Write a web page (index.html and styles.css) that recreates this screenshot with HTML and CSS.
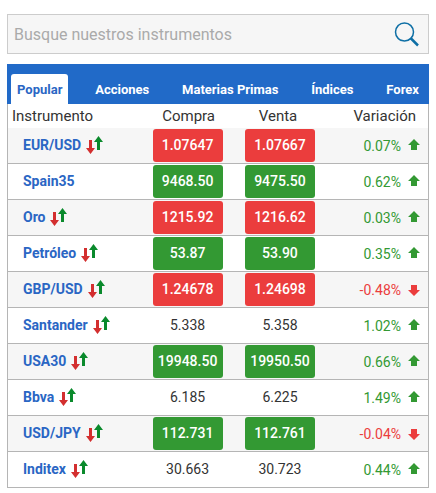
FILE: index.html
```html
<!DOCTYPE html>
<html lang="es">
<head>
    <meta charset="UTF-8">
    <meta name="viewport" content="width=device-width, initial-scale=1.0">
    <title>Instrumentos</title>
    <link rel="stylesheet" href="styles.css">
</head>

<body>
    <svg class="sprite" aria-hidden="true">
        <symbol id="swap" viewBox="0 0 17 18">
            <path fill="#d32f2f" d="M3 4h3v8h3L4.500 18 0 12h3z"/>
            <path fill="#0a8a2c" d="M12.500 0L17 6h-3v8h-3V6H8z"/>
        </symbol>
        <symbol id="up" viewBox="0 0 12 11">
            <path d="M6 0l6 6H9v5H3V6H0z"/>
        </symbol>
        <symbol id="down" viewBox="0 0 12 11">
            <path d="M6 11l6-6H9V0H3v5H0z"/>
        </symbol>
    </svg>

    <form class="search">
        <input class="search-input" type="text" placeholder="Busque nuestros instrumentos" aria-label="Busque nuestros instrumentos">
        <button class="search-btn" type="button" aria-label="Buscar">
            <svg width="25" height="25" viewBox="0 0 25 25" fill="none" stroke="#0e6fa5">
                <circle cx="10.500" cy="10" r="9" stroke-width="1.500"/>
                <path d="M16.500 16l7.500 7.500" stroke-width="2.500"/>
            </svg>
        </button>
    </form>

    <div class="market">
        <div class="tabs">
            <button class="tab active" type="button">Popular</button>
            <button class="tab" type="button">Acciones</button>
            <button class="tab" type="button">Materias Primas</button>
            <button class="tab" type="button">Índices</button>
            <button class="tab" type="button">Forex</button>
        </div>
        <table class="quotes">
            <thead>
                <tr>
                    <th class="name">Instrumento</th>
                    <th class="price">Compra</th>
                    <th class="price sell">Venta</th>
                    <th class="change">Variación</th>
                </tr>
            </thead>
            <tbody>
                <tr>
                    <td class="name"><a href="#">EUR/USD</a><svg class="swap"><use href="#swap"/></svg></td>
                    <td class="price"><button class="quote red" type="button">1.07647</button></td>
                    <td class="price"><button class="quote red" type="button">1.07667</button></td>
                    <td class="change up">0.07%<svg class="arrow"><use href="#up"/></svg></td>
                </tr>
                <tr>
                    <td class="name"><a href="#">Spain35</a></td>
                    <td class="price"><button class="quote green" type="button">9468.50</button></td>
                    <td class="price"><button class="quote green" type="button">9475.50</button></td>
                    <td class="change up">0.62%<svg class="arrow"><use href="#up"/></svg></td>
                </tr>
                <tr>
                    <td class="name"><a href="#">Oro</a><svg class="swap"><use href="#swap"/></svg></td>
                    <td class="price"><button class="quote red" type="button">1215.92</button></td>
                    <td class="price"><button class="quote red" type="button">1216.62</button></td>
                    <td class="change up">0.03%<svg class="arrow"><use href="#up"/></svg></td>
                </tr>
                <tr>
                    <td class="name"><a href="#">Petróleo</a><svg class="swap"><use href="#swap"/></svg></td>
                    <td class="price"><button class="quote green" type="button">53.87</button></td>
                    <td class="price"><button class="quote green" type="button">53.90</button></td>
                    <td class="change up">0.35%<svg class="arrow"><use href="#up"/></svg></td>
                </tr>
                <tr>
                    <td class="name"><a href="#">GBP/USD</a><svg class="swap"><use href="#swap"/></svg></td>
                    <td class="price"><button class="quote red" type="button">1.24678</button></td>
                    <td class="price"><button class="quote red" type="button">1.24698</button></td>
                    <td class="change down">-0.48%<svg class="arrow"><use href="#down"/></svg></td>
                </tr>
                <tr>
                    <td class="name"><a href="#">Santander</a><svg class="swap"><use href="#swap"/></svg></td>
                    <td class="price"><button class="quote" type="button">5.338</button></td>
                    <td class="price"><button class="quote" type="button">5.358</button></td>
                    <td class="change up">1.02%<svg class="arrow"><use href="#up"/></svg></td>
                </tr>
                <tr>
                    <td class="name"><a href="#">USA30</a><svg class="swap"><use href="#swap"/></svg></td>
                    <td class="price"><button class="quote green" type="button">19948.50</button></td>
                    <td class="price"><button class="quote green" type="button">19950.50</button></td>
                    <td class="change up">0.66%<svg class="arrow"><use href="#up"/></svg></td>
                </tr>
                <tr>
                    <td class="name"><a href="#">Bbva</a><svg class="swap"><use href="#swap"/></svg></td>
                    <td class="price"><button class="quote" type="button">6.185</button></td>
                    <td class="price"><button class="quote" type="button">6.225</button></td>
                    <td class="change up">1.49%<svg class="arrow"><use href="#up"/></svg></td>
                </tr>
                <tr>
                    <td class="name"><a href="#">USD/JPY</a><svg class="swap"><use href="#swap"/></svg></td>
                    <td class="price"><button class="quote green" type="button">112.731</button></td>
                    <td class="price"><button class="quote green" type="button">112.761</button></td>
                    <td class="change down">-0.04%<svg class="arrow"><use href="#down"/></svg></td>
                </tr>
                <tr>
                    <td class="name"><a href="#">Inditex</a><svg class="swap"><use href="#swap"/></svg></td>
                    <td class="price"><button class="quote" type="button">30.663</button></td>
                    <td class="price"><button class="quote" type="button">30.723</button></td>
                    <td class="change up">0.44%<svg class="arrow"><use href="#up"/></svg></td>
                </tr>
            </tbody>
        </table>
    </div>
</body>
</html>
```
FILE: styles.css
```css
*{
    box-sizing: border-box;
}
body{
    margin: 0;
    padding: 14px 7px 5px;
    background-color: #fff;
    color: #333;
    font-family: Roboto, sans-serif;
    font-size: 14px;
}
button, input{
    font-family: inherit;
}
button{
    border: 0;
    padding: 0;
    background: none;
    cursor: pointer;
}
.sprite{
    display: none;
}
/*search*/
.search{
    display: flex;
    align-items: center;
    height: 40px;
    margin-bottom: 10px;
    padding: 0 9px 0 6px;
    border: 1px solid #ccc;
    background-color: #f6f6f6;
}
.search-input{
    flex: 1;
    min-width: 0;
    padding: 0;
    border: 0;
    background: none;
    color: #333;
    font-size: 16px;
}
.search-input::placeholder{
    color: #aaa;
}
.search-btn svg{
    display: block;
}
/*tabs*/
.tabs{
    display: flex;
    justify-content: space-between;
    padding: 10px 4px 0;
    background-color: #216ac8;
}
.tab{
    height: 30px;
    padding: 0 6px;
    border-radius: 3px 3px 0 0;
    color: #fff;
    font-size: 13px;
    font-weight: 700;
}
.tab.active{
    background-color: #fff;
    color: #2a66c4;
}
/*quotes table*/
.quotes{
    width: 100%;
    border: 1px solid #b5b5b5;
    border-top: 0;
    border-spacing: 0;
    table-layout: fixed;
}
.quotes th{
    height: 24px;
    padding: 0;
    font-size: 15px;
    font-weight: 400;
}
.quotes td{
    height: 36px;
    padding: 0;
    border-bottom: 1px solid #b5b5b5;
    line-height: 18px;
}
.quotes tr:last-child td{
    height: 35px;
    border-bottom: 0;
}
.quotes tbody tr:nth-child(odd){
    background-color: #f6f6f6;
}
.quotes .name{
    width: 32%;
    padding-left: 15px;
    text-align: left;
}
.quotes th.name{
    padding-left: 4px;
}
.quotes td.name{
    padding-bottom: 2px;
}
.price{
    width: 22%;
    text-align: center;
}
.quotes td.price{
    padding-right: 2px;
}
.quotes th.sell{
    padding-right: 6px;
}
.quotes .change{
    padding-right: 8px;
    text-align: right;
}
.quotes th.change{
    padding-right: 12px;
}
.name a{
    color: #2a66c4;
    font-weight: 700;
    text-decoration: none;
}
.swap{
    width: 17px;
    height: 18px;
    margin-left: 5px;
    vertical-align: top;
}
.quote{
    display: block;
    width: 70px;
    height: 33px;
    margin: 0 auto;
    padding-bottom: 1px;
    border-radius: 3px;
    color: #333;
    font-size: 14px;
}
.red, .green{
    color: #fff;
    font-weight: 500;
}
.red{
    background-color: #eb3d3d;
}
.green{
    background-color: #339933;
}
.arrow{
    width: 12px;
    height: 11px;
    margin-left: 7px;
    fill: currentColor;
}
.up{
    color: #339933;
}
.up .arrow{
    vertical-align: 1px;
}
.down{
    color: #eb3d3d;
}
.down .arrow{
    vertical-align: -1px;
}
```
